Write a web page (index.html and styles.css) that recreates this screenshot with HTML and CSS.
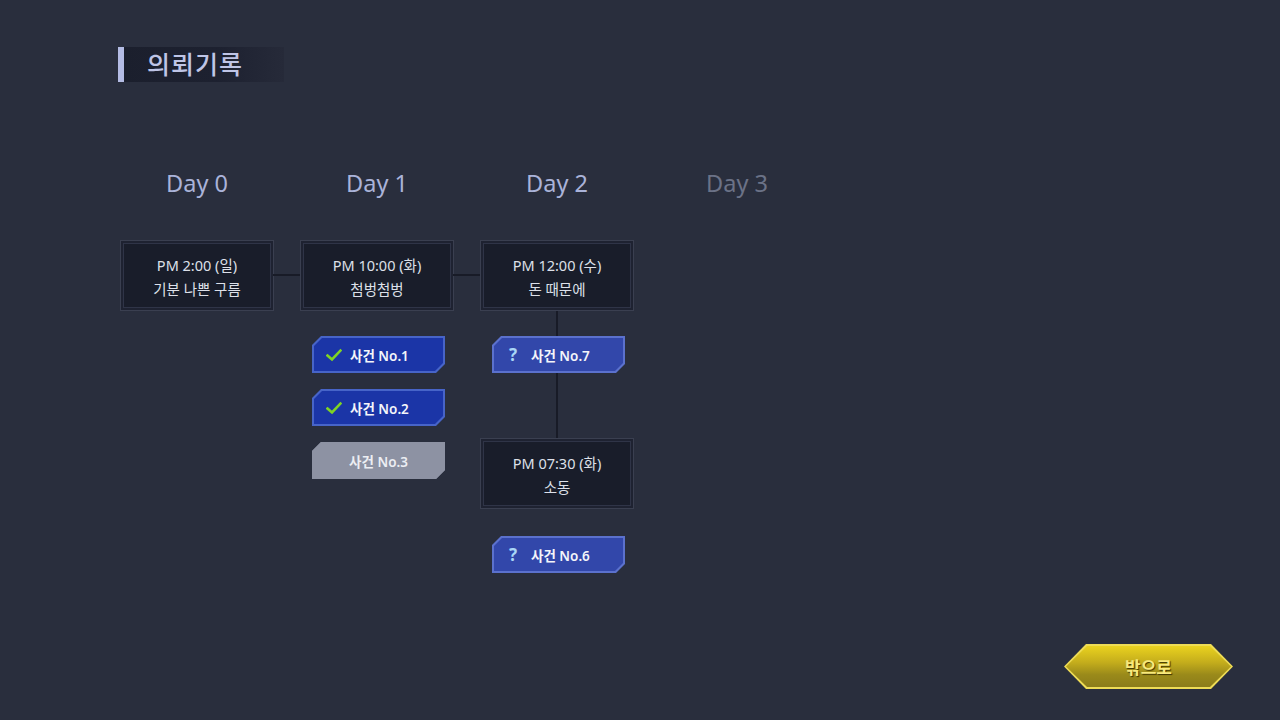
FILE: index.html
```html
<!DOCTYPE html>
<html lang="ko">
<head>
<meta charset="utf-8">
<title>의뢰기록</title>
<link rel="stylesheet" href="styles.css">
</head>
<body>
<div class="page">
  <header class="title">
    <span class="title-accent"></span>
    <h1 class="title-text">의뢰기록</h1>
  </header>

  <div class="timeline">
    <section class="col">
      <div class="day">Day 0</div>
      <div class="node has-next"><div class="node-inner"><span>PM 2:00 (일)</span><span>기분 나쁜 구름</span></div></div>
    </section>

    <section class="col">
      <div class="day">Day 1</div>
      <div class="node has-next"><div class="node-inner"><span>PM 10:00 (화)</span><span>첨벙첨벙</span></div></div>
      <div class="cases">
        <div class="case done"><div class="case-fill">
          <svg class="check" viewBox="0 0 16 14" width="16" height="14"><path d="M1.5 7.5 L6 11.5 L14.5 2.5" fill="none" stroke="#7fd323" stroke-width="2.6" stroke-linecap="square"/></svg>
          <span class="case-label">사건 No.1</span>
        </div></div>
        <div class="case done"><div class="case-fill">
          <svg class="check" viewBox="0 0 16 14" width="16" height="14"><path d="M1.5 7.5 L6 11.5 L14.5 2.5" fill="none" stroke="#7fd323" stroke-width="2.6" stroke-linecap="square"/></svg>
          <span class="case-label">사건 No.2</span>
        </div></div>
        <div class="case locked"><div class="case-fill center">
          <span class="case-label">사건 No.3</span>
        </div></div>
      </div>
    </section>

    <section class="col">
      <div class="day">Day 2</div>
      <div class="node"><div class="node-inner"><span>PM 12:00 (수)</span><span>돈 때문에</span></div></div>
      <div class="branch">
        <div class="case open"><div class="case-fill">
          <span class="qmark">?</span>
          <span class="case-label">사건 No.7</span>
        </div></div>
      </div>
      <div class="node"><div class="node-inner"><span>PM 07:30 (화)</span><span>소동</span></div></div>
      <div class="cases after-node">
        <div class="case open"><div class="case-fill">
          <span class="qmark">?</span>
          <span class="case-label">사건 No.6</span>
        </div></div>
      </div>
    </section>

    <section class="col">
      <div class="day future">Day 3</div>
    </section>
  </div>

  <footer class="footer">
    <button class="exit"><span class="exit-fill">밖으로</span></button>
  </footer>
</div>
</body>
</html>
```

FILE: styles.css
```css
* { box-sizing: border-box; }

html, body {
  margin: 0;
  padding: 0;
  background: #292e3d;
}

body {
  font-family: "Noto Sans", "Noto Sans CJK KR", sans-serif;
  color: #dfe2ea;
}

.page {
  width: 1280px;
  height: 720px;
  display: flex;
  flex-direction: column;
  padding: 47px 0 31px 118px;
}

/* Title */
.title {
  display: flex;
  align-items: stretch;
  width: 166px;
  height: 35px;
  background: linear-gradient(to right, #1b1f2d 0%, #1d2130 60%, #262a39 100%);
}

.title-accent {
  width: 6px;
  background: #b4bce4;
}

.title-text {
  margin: 0 0 0 23px;
  font-size: 25px;
  font-weight: 500;
  line-height: 35px;
  color: #bfc5e6;
  letter-spacing: 1px;
}

/* Timeline */
.timeline {
  display: flex;
  gap: 26px;
  margin: 86px 0 0 2px;
}

.col {
  width: 154px;
  display: flex;
  flex-direction: column;
}

.day {
  height: 30px;
  line-height: 30px;
  text-align: center;
  font-size: 23.5px;
  color: #aab3d9;
  margin-bottom: 42px;
}

.day.future {
  color: #6b7287;
}

.node {
  position: relative;
  height: 71px;
  border: 1px solid #3a3f50;
  background: #1e2231;
  padding: 2px;
}

.node.has-next::after {
  content: "";
  position: absolute;
  left: 100%;
  top: 33px;
  width: 28px;
  height: 2px;
  background: #181b27;
}

.node-inner {
  height: 100%;
  border: 1px solid #2f3447;
  background: #191d2a;
  display: flex;
  flex-direction: column;
  align-items: center;
  justify-content: center;
  padding-top: 3px;
  font-size: 14.5px;
  line-height: 24px;
  color: #dde0e9;
}

/* Cases */
.cases {
  display: flex;
  flex-direction: column;
  gap: 16px;
  margin-top: 25px;
  padding-left: 12px;
}

.cases.after-node {
  margin-top: 27px;
  padding-left: 12px;
}

.branch {
  height: 127px;
  padding: 25px 0 0 12px;
  background: linear-gradient(to right,
    transparent 76px, #181b27 76px, #181b27 78px, transparent 78px);
}

.case {
  width: 133px;
  height: 37px;
  padding: 2px;
  clip-path: polygon(9px 0, 100% 0, 100% calc(100% - 9px), calc(100% - 9px) 100%, 0 100%, 0 9px);
}

.case-fill {
  height: 100%;
  display: flex;
  align-items: center;
  padding-left: 12px;
  clip-path: polygon(8px 0, 100% 0, 100% calc(100% - 8px), calc(100% - 8px) 100%, 0 100%, 0 8px);
}

.case-fill.center {
  justify-content: center;
  padding-left: 0;
}

.case.done { background: #4764c8; }
.case.done .case-fill { background: #1b35a7; }

.case.open { background: #5b71cd; }
.case.open .case-fill { background: #3247aa; }

.case.locked { background: #8d92a3; padding: 0; }
.case.locked .case-fill { background: #8d92a3; }

.check {
  display: block;
  margin-right: 8px;
}

.qmark {
  width: 10px;
  margin-left: 3px;
  margin-right: 12px;
  font-size: 17px;
  font-weight: 700;
  color: #a9d6f7;
  line-height: 1;
}

.case-label {
  font-size: 13.5px;
  font-weight: 600;
  color: #f4f5fa;
}

.case.locked .case-label {
  color: #eceef3;
}

/* Footer button */
.footer {
  margin-top: auto;
  display: flex;
  justify-content: flex-end;
  padding-right: 47px;
}

.exit {
  width: 169px;
  height: 45px;
  border: 0;
  padding: 2px;
  background: #eedc55;
  cursor: pointer;
  clip-path: polygon(22px 0, calc(100% - 22px) 0, 100% 50%, calc(100% - 22px) 100%, 22px 100%, 0 50%);
  font-family: "Noto Sans", "Noto Sans CJK KR", sans-serif;
}

.exit-fill {
  display: flex;
  height: 100%;
  align-items: center;
  justify-content: center;
  background: linear-gradient(to bottom, #ead21f 0%, #c4ad1c 40%, #9a8a1a 70%, #8b7c1a 100%);
  clip-path: polygon(21px 0, calc(100% - 21px) 0, 100% 50%, calc(100% - 21px) 100%, 21px 100%, 0 50%);
  font-size: 17px;
  font-weight: 700;
  color: #f8e97c;
  text-shadow: 1px 1px 1px #3d3300;
}
```
